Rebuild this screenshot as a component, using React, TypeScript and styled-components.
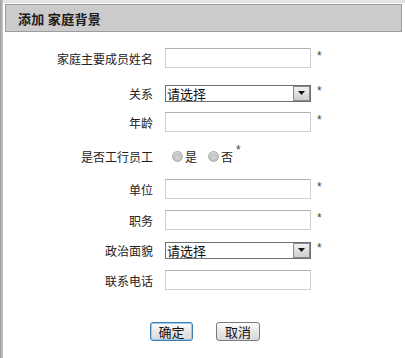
import styled, { createGlobalStyle } from "styled-components";

const GlobalStyle = createGlobalStyle`
  body {
    margin: 0;
    background: #fff;
    font-family: "Noto Sans CJK SC", "Noto Sans", sans-serif;
    color: #222;
  }
`;

const Frame = styled.div`
  display: flex;
  width: 405px;
  height: 358px;
  overflow: hidden;
`;

const Side = styled.div`
  width: 3px;
  background: linear-gradient(to right, #9a9a9a, #c9c9c9);
`;

const Content = styled.div`
  flex: 1;
  border-top: 3px solid #e4e4e4;
`;

const Header = styled.div`
  margin: 1px 3px 0 2px;
  height: 26px;
  border: 1px solid #9c9c9c;
  background: #cbcbcb;
  display: flex;
  align-items: center;
  padding-left: 12px;
  font-size: 13px;
  font-weight: bold;
  color: #1a1a1a;
  letter-spacing: 0.3px;
`;

const Form = styled.div`
  display: flex;
  flex-direction: column;
`;

const Row = styled.div<{ $space: number }>`
  display: flex;
  align-items: center;
  height: 20px;
  margin-top: ${(p) => p.$space}px;
`;

const Label = styled.div`
  width: 150px;
  margin-right: 12px;
  text-align: right;
  font-size: 12px;
  line-height: 20px;
  padding-top: 2px;
  color: #222;
`;

const Input = styled.input`
  box-sizing: border-box;
  width: 146px;
  height: 20px;
  margin: 0;
  border: 1px solid #cfcfcf;
  border-top-color: #b0b0b0;
  background: #fff;
  outline: none;
`;

const SelectBox = styled.div`
  box-sizing: border-box;
  width: 146px;
  height: 17px;
  display: flex;
  border: 1px solid #6f6f6f;
  background: #fff;
`;

const Select = styled.select`
  flex: 1;
  appearance: none;
  border: none;
  outline: none;
  background: transparent;
  font-family: "Noto Sans CJK SC", sans-serif;
  font-size: 13px;
  line-height: 15px;
  padding: 0 0 0 1px;
  margin: 0;
  color: #111;
`;

const ArrowBox = styled.div`
  box-sizing: border-box;
  width: 17px;
  height: 15px;
  border: 1px solid #8a8a8a;
  background: linear-gradient(#f0f0f0, #cfcfcf);
  display: flex;
  align-items: center;
  justify-content: center;
`;

const Star = styled.span<{ $raised?: boolean }>`
  margin-left: ${(p) => (p.$raised ? 3 : 6)}px;
  font-size: 12px;
  color: #444;
  font-family: "Liberation Sans", sans-serif;
  position: relative;
  top: ${(p) => (p.$raised ? -6 : -2)}px;
`;

const RadioGroup = styled.div`
  display: flex;
  align-items: center;
  padding-left: 7px;
`;

const Radio = styled.span`
  box-sizing: border-box;
  width: 11px;
  height: 11px;
  border-radius: 50%;
  border: 1px solid #a8a8a8;
  background: radial-gradient(circle at 50% 60%, #d9d9d9 0%, #c2c2c2 45%, #ededed 100%);
  margin-right: 2px;
`;

const RadioText = styled.span`
  font-size: 12px;
  margin-right: 11px;
  &:last-child {
    margin-right: 0;
  }
`;

const Buttons = styled.div`
  display: flex;
  justify-content: center;
  gap: 23px;
  margin-top: 32px;
  padding-left: 2px;
`;

const Button = styled.button<{ $primary?: boolean }>`
  box-sizing: border-box;
  width: ${(p) => (p.$primary ? 43 : 44)}px;
  height: 19px;
  padding: 0;
  border-radius: 3px;
  border: 1px solid ${(p) => (p.$primary ? "#3a7fb5" : "#7a7a7a")};
  box-shadow: ${(p) => (p.$primary ? "inset 0 0 0 1px #9cc9ea" : "none")};
  background: linear-gradient(#fdfdfd, #e6e6e6 55%, #dadada);
  font-family: "Noto Sans CJK SC", sans-serif;
  font-size: 13px;
  line-height: 17px;
  color: #111;
`;

const Arrow = () => (
  <svg width="7" height="4" viewBox="0 0 7 4">
    <path d="M0 0 H7 L3.5 4 Z" fill="#111" />
  </svg>
);

const Dropdown = () => (
  <SelectBox>
    <Select defaultValue="">
      <option value="">请选择</option>
    </Select>
    <ArrowBox>
      <Arrow />
    </ArrowBox>
  </SelectBox>
);

export default function App() {
  return (
    <Frame>
      <GlobalStyle />
      <Side />
      <Content>
        <Header>添加 家庭背景</Header>
        <Form>
          <Row $space={16}>
            <Label>家庭主要成员姓名</Label>
            <Input />
            <Star>*</Star>
          </Row>
          <Row $space={15}>
            <Label>关系</Label>
            <Dropdown />
            <Star>*</Star>
          </Row>
          <Row $space={9}>
            <Label>年龄</Label>
            <Input />
            <Star>*</Star>
          </Row>
          <Row $space={14}>
            <Label>是否工行员工</Label>
            <RadioGroup>
              <Radio />
              <RadioText>是</RadioText>
              <Radio />
              <RadioText>否</RadioText>
            </RadioGroup>
            <Star $raised>*</Star>
          </Row>
          <Row $space={13}>
            <Label>单位</Label>
            <Input />
            <Star>*</Star>
          </Row>
          <Row $space={11}>
            <Label>职务</Label>
            <Input />
            <Star>*</Star>
          </Row>
          <Row $space={10}>
            <Label>政治面貌</Label>
            <Dropdown />
            <Star>*</Star>
          </Row>
          <Row $space={10}>
            <Label>联系电话</Label>
            <Input />
          </Row>
        </Form>
        <Buttons>
          <Button $primary>确定</Button>
          <Button>取消</Button>
        </Buttons>
      </Content>
    </Frame>
  );
}
